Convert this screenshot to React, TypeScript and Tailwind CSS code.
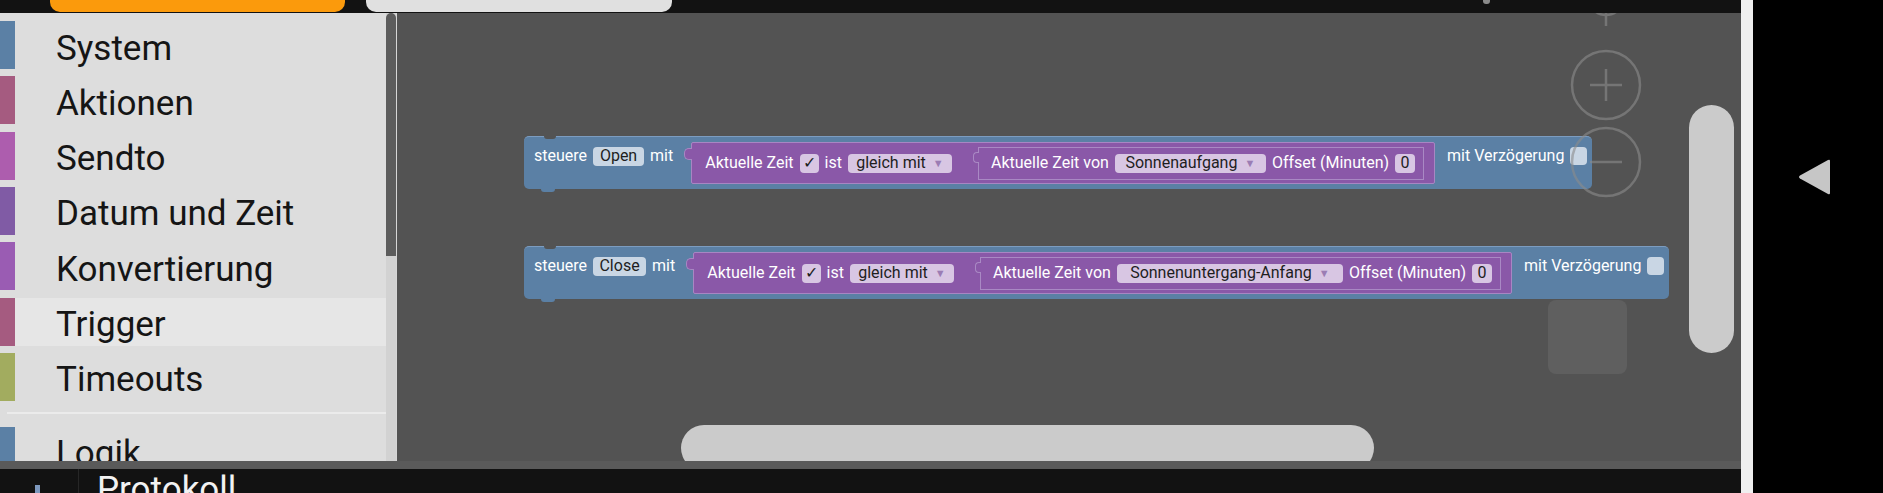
import React from "react";

type Category = {
  name: string;
  color: string;
  active?: boolean;
};

const categories: Category[] = [
  { name: "System", color: "bg-[#5b80a5]" },
  { name: "Aktionen", color: "bg-[#a55b80]" },
  { name: "Sendto", color: "bg-[#ad5dae]" },
  { name: "Datum und Zeit", color: "bg-[#805ba5]" },
  { name: "Konvertierung", color: "bg-[#9a5cb3]" },
  { name: "Trigger", color: "bg-[#a55b80]", active: true },
  { name: "Timeouts", color: "bg-[#a2ac5f]" },
];

// small rounded field inside a block (text input / dropdown / checkbox)
const Field = ({
  children,
  tone,
  className = "",
}: {
  children?: React.ReactNode;
  tone: "blue" | "purple";
  className?: string;
}) => (
  <span
    className={`flex h-[19px] shrink-0 items-center justify-center rounded-[4px] leading-none text-[#1e1e1e] ${
      tone === "blue" ? "bg-[#c9d6e4]" : "bg-[#d8c6e3]"
    } ${className}`}
  >
    {children}
  </span>
);

const Arrow = () => <span className="ml-[7px] text-[11px] text-[#9b7db4]">▼</span>;

const ControlBlock = ({
  target,
  targetWidth,
  sun,
  sunWidth,
  className,
}: {
  target: string;
  targetWidth: string;
  sun: string;
  sunWidth: string;
  className: string;
}) => (
  <div
    className={`absolute flex h-[53px] items-start rounded-[5px] border-t border-[#7c9cc0] bg-[#5b80a5] pl-[10px] pr-[5px] text-[16px] text-white ${className}`}
  >
    {/* top notch and bottom tab */}
    <div className="absolute left-[20px] top-[-1px] h-[3px] w-[12px] rounded-b-[4px] bg-[#535353]" />
    <div className="absolute left-[17px] top-full h-[3px] w-[14px] rounded-b-[4px] bg-[#5b80a5]" />

    <div className="flex h-[38px] items-center gap-[6px]">
      <span>steuere</span>
      <Field tone="blue" className={targetWidth}>
        {target}
      </Field>
      <span>mit</span>
    </div>

    <div className="relative ml-[18px] mt-[5px] flex h-[42px] items-center gap-[6px] rounded-[2px] border border-[#a886c3] bg-[#8a58a8] pl-[13px] pr-[10px]">
      <div className="absolute left-[-8px] top-[5px] h-[12px] w-[8px] rounded-l-[5px] border-y border-l border-[#a886c3] bg-[#8a58a8]" />
      <span>Aktuelle Zeit</span>
      <Field tone="purple" className="w-[19px] text-[16px]">
        ✓
      </Field>
      <span>ist</span>
      <Field tone="purple" className="w-[104px] px-[7px]">
        gleich mit
        <Arrow />
      </Field>

      <div className="relative ml-[20px] flex h-[33px] items-center gap-[6px] border border-[#a989c4] bg-[#8a58a8] pl-[12px] pr-[8px]">
        <div className="absolute left-[-6px] top-[4px] h-[11px] w-[6px] rounded-l-[4px] border-y border-l border-[#a989c4] bg-[#8a58a8]" />
        <span>Aktuelle Zeit von</span>
        <Field tone="purple" className={`${sunWidth} px-[7px]`}>
          {sun}
          <Arrow />
        </Field>
        <span>Offset (Minuten)</span>
        <Field tone="purple" className="w-[20px]">
          0
        </Field>
      </div>
    </div>

    <div className="ml-[12px] flex h-[38px] items-center gap-[6px]">
      <span>mit Verzögerung</span>
      <span className="h-[18px] w-[17px] rounded-[4px] bg-[#c9d6e4]" />
    </div>
  </div>
);

const Sidebar = () => (
  <div className="flex w-[397px] shrink-0">
    <div className="flex w-[386px] flex-col gap-[7.33px] overflow-hidden bg-[#dddddd] pt-[8px]">
      {categories.map((c) => (
        <div key={c.name} className="flex h-[48px] shrink-0">
          <div className={`w-[15px] shrink-0 ${c.color}`} />
          <div
            className={`flex flex-1 items-center pl-[41px] pt-[6px] text-[35px] leading-[41px] text-[#151515] ${
              c.active ? "bg-[#e6e6e6]" : ""
            }`}
          >
            {c.name}
          </div>
        </div>
      ))}
      <div className="flex h-[6px] shrink-0 items-end pl-[7px]">
        <div className="h-[2px] w-full bg-[#ebebeb]" />
      </div>
      <div className="mt-[5px] flex h-[48px] shrink-0">
        <div className="w-[15px] shrink-0 bg-[#5b80a5]" />
        <div className="flex flex-1 items-center pl-[41px] pt-[6px] text-[35px] leading-[41px] text-[#151515]">
          Logik
        </div>
      </div>
    </div>
    <div className="flex w-[10px] flex-col bg-[#d2d2d2]">
      <div className="h-[243px] rounded-t-[5px] bg-[#5c5c5c]" />
    </div>
    <div className="w-[1px] bg-[#d6d6d6]" />
  </div>
);

const Workspace = () => (
  <div className="relative flex-1 overflow-hidden bg-[#535353]">
    {/* trash can */}
    <div className="absolute left-[1151px] top-[287px] h-[74px] w-[79px] rounded-[8px] bg-[#5f5f5f]" />

    <ControlBlock
      target="Open"
      targetWidth="w-[51px]"
      sun="Sonnenaufgang"
      sunWidth="w-[151px]"
      className="left-[127px] top-[123px]"
    />
    <ControlBlock
      target="Close"
      targetWidth="w-[53px]"
      sun="Sonnenuntergang-Anfang"
      sunWidth="w-[226px]"
      className="left-[127px] top-[233px]"
    />

    {/* zoom controls */}
    <svg
      className="absolute left-[1168px] top-[-20px] opacity-60"
      width="82"
      height="220"
      viewBox="0 0 82 220"
      fill="none"
      stroke="#8c8c8c"
      strokeWidth="2.5"
    >
      <circle cx="41" cy="4" r="18" />
      <line x1="41" y1="14" x2="41" y2="33" />
      <circle cx="41" cy="92" r="34" />
      <line x1="25" y1="92" x2="57" y2="92" />
      <line x1="41" y1="76" x2="41" y2="108" />
      <circle cx="41" cy="169" r="34" />
      <line x1="25" y1="169" x2="57" y2="169" />
    </svg>

    {/* scrollbars */}
    <div className="absolute left-[1292px] top-[92px] h-[248px] w-[45px] rounded-full bg-[#cbcbcb]" />
    <div className="absolute left-[284px] top-[412px] h-[46px] w-[693px] rounded-full bg-[#cbcbcb]" />
  </div>
);

export default function App() {
  return (
    <div className="flex h-[493px] w-[1883px] overflow-hidden bg-black font-['Roboto',sans-serif]">
      <div className="flex w-[1741px] shrink-0 flex-col">
        <div className="flex h-[13px] shrink-0 items-start gap-[21px] bg-[#121212] pl-[50px]">
          <div className="h-[12px] w-[295px] rounded-b-[10px] bg-[#fb9a0c]" />
          <div className="h-[12px] w-[306px] rounded-b-[10px] bg-[#e0e0e0]" />
          <div className="ml-[790px] h-[4px] w-[7px] rounded-b-[3px] bg-[#8a8a8a]" />
        </div>

        <div className="flex h-[448px] shrink-0">
          <Sidebar />
          <Workspace />
        </div>

        <div className="h-[8px] shrink-0 bg-[#5a5a5a]" />

        <div className="flex h-[24px] shrink-0 overflow-hidden bg-[#121212]">
          <div className="flex w-[78px] shrink-0 justify-start pl-[35px] pt-[16px]">
            <div className="h-[10px] w-[5px] bg-[#7d98bd]" />
          </div>
          <div className="w-[1px] bg-[#262626]" />
          <div className="pl-[18px] text-[35px] leading-[41px] text-[#f2f2f2]">Protokoll</div>
        </div>
      </div>

      <div className="w-[12px] shrink-0 bg-[#efefef]" />

      <div className="flex flex-1 items-start pl-[45px] pt-[159px]">
        <svg width="32" height="36" viewBox="0 0 32 36">
          <path d="M30 1 L2 16.5 Q0 18 2 19.5 L30 35 Q32 36 32 34 L32 2 Q32 0 30 1 Z" fill="#c6c6c6" />
        </svg>
      </div>
    </div>
  );
}
